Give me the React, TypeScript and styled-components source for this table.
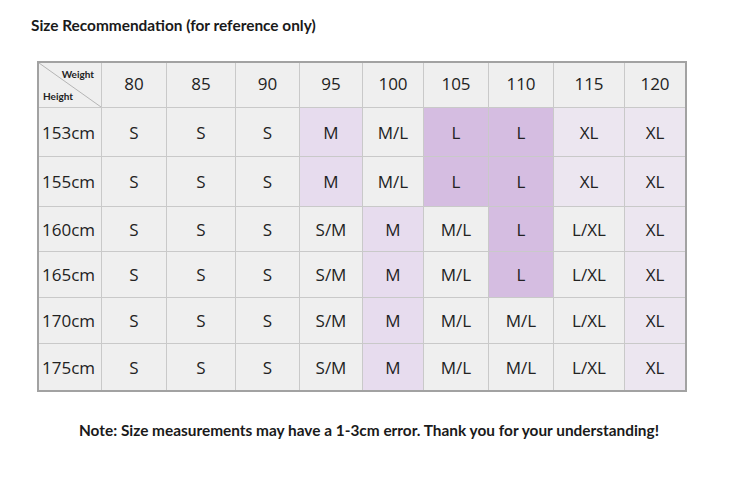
import React from "react";
import styled, { createGlobalStyle } from "styled-components";

const Global = createGlobalStyle`
  html, body { margin: 0; padding: 0; background: #ffffff; }
  body { width: 750px; height: 487px; overflow: hidden; }
`;

const Page = styled.div`
  padding: 15px 0 0 31px;
  width: 750px;
  box-sizing: border-box;
  font-family: "Open Sans", "Noto Sans", sans-serif;
`;

const Title = styled.h1`
  margin: 0;
  font-family: Lato, "Liberation Sans", sans-serif;
  font-weight: 700;
  font-size: 15.4px;
  line-height: 20px;
  color: #1a1a1a;
`;

const Table = styled.div`
  margin: 26px 0 0 6px;
  width: 650px;
  box-sizing: border-box;
  display: grid;
  grid-template-columns: 63px 65px 69px 64px 63px 61px 65px 65px 71px 60px;
  grid-template-rows: 45px 49px 50px 45px 46px 46px 46px;
  border: 2px solid #a2a2a2;
  background: #efefef;
`;

type Tone = "plain" | "mid" | "deep" | "soft";

const toneColor: Record<Tone, string> = {
  plain: "#efefef",
  mid: "#e7dcee",
  deep: "#d5bde1",
  soft: "#ece6f0",
};

const Cell = styled.div<{ $tone?: Tone; $lastCol?: boolean; $lastRow?: boolean; $head?: boolean }>`
  display: flex;
  align-items: center;
  justify-content: center;
  padding-bottom: ${(p) => (p.$head ? "3px" : "0")};
  background: ${(p) => toneColor[p.$tone || "plain"]};
  border-right: ${(p) => (p.$lastCol ? "none" : "1px solid #c9c9c9")};
  border-bottom: ${(p) => (p.$lastRow ? "none" : "1px solid #c9c9c9")};
  font-size: 17px;
  color: #222;
  box-sizing: border-box;
`;

const HeightCell = styled(Cell)`
  justify-content: flex-start;
  padding-left: 3px;
`;

const Corner = styled.div`
  position: relative;
  display: flex;
  flex-direction: column;
  justify-content: space-between;
  padding: 5px 7px 5px 4px;
  border-right: 1px solid #c9c9c9;
  border-bottom: 1px solid #c9c9c9;
  box-sizing: border-box;
  font-family: Lato, "Liberation Sans", sans-serif;
  font-weight: 700;
  font-size: 10px;
  line-height: 12px;
  color: #222;
`;

const Diagonal = styled.svg`
  position: absolute;
  inset: 0;
  width: 100%;
  height: 100%;
`;

const Weight = styled.span`
  align-self: flex-end;
  position: relative;
`;

const HeightLabel = styled.span`
  align-self: flex-start;
  position: relative;
`;

const Note = styled.p`
  margin: 28px 0 0 0;
  width: 676px;
  text-align: center;
  font-family: Lato, "Liberation Sans", sans-serif;
  font-weight: 700;
  font-size: 15.4px;
  line-height: 20px;
  color: #1a1a1a;
`;

const weights = ["80", "85", "90", "95", "100", "105", "110", "115", "120"];

type Entry = [string, Tone];
const rowA: Entry[] = [
  ["S", "plain"], ["S", "plain"], ["S", "plain"], ["M", "mid"], ["M/L", "plain"],
  ["L", "deep"], ["L", "deep"], ["XL", "soft"], ["XL", "soft"],
];
const rowB: Entry[] = [
  ["S", "plain"], ["S", "plain"], ["S", "plain"], ["S/M", "plain"], ["M", "mid"],
  ["M/L", "plain"], ["L", "deep"], ["L/XL", "plain"], ["XL", "soft"],
];
const rowC: Entry[] = [
  ["S", "plain"], ["S", "plain"], ["S", "plain"], ["S/M", "plain"], ["M", "mid"],
  ["M/L", "plain"], ["M/L", "plain"], ["L/XL", "plain"], ["XL", "soft"],
];

const rows: { h: string; cells: Entry[] }[] = [
  { h: "153cm", cells: rowA },
  { h: "155cm", cells: rowA },
  { h: "160cm", cells: rowB },
  { h: "165cm", cells: rowB },
  { h: "170cm", cells: rowC },
  { h: "175cm", cells: rowC },
];

export default function App() {
  return (
    <>
      <Global />
      <Page>
        <Title>Size Recommendation (for reference only)</Title>
        <Table>
          <Corner>
            <Diagonal viewBox="0 0 62 44" preserveAspectRatio="none">
              <line x1="0" y1="0" x2="62" y2="44" stroke="#b5b5b5" strokeWidth="1" />
            </Diagonal>
            <Weight>Weight</Weight>
            <HeightLabel>Height</HeightLabel>
          </Corner>
          {weights.map((w, i) => (
            <Cell key={w} $head $lastCol={i === weights.length - 1}>
              {w}
            </Cell>
          ))}
          {rows.map((r, ri) => (
            <React.Fragment key={r.h}>
              <HeightCell $lastRow={ri === rows.length - 1}>{r.h}</HeightCell>
              {r.cells.map(([t, tone], ci) => (
                <Cell
                  key={ci}
                  $tone={tone}
                  $lastCol={ci === r.cells.length - 1}
                  $lastRow={ri === rows.length - 1}
                >
                  {t}
                </Cell>
              ))}
            </React.Fragment>
          ))}
        </Table>
        <Note>Note: Size measurements may have a 1-3cm error. Thank you for your understanding!</Note>
      </Page>
    </>
  );
}
